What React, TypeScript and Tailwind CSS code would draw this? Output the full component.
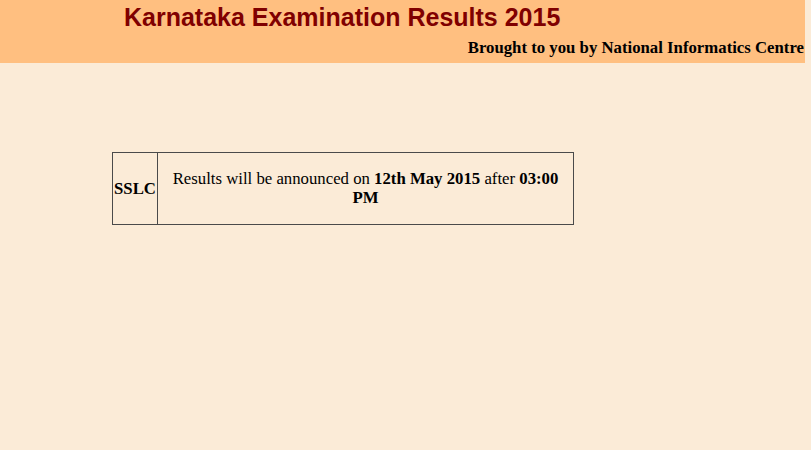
export default function App() {
  return (
    <div className="w-[811px] h-[450px] bg-[#fbebd7] overflow-hidden" style={{ fontFamily: '"Liberation Serif", serif' }}>
      <div className="w-[805px] h-[63px] bg-[#ffbf80] flex flex-col">
        <div className="pl-[124px] pt-[2px] h-[34px] text-[25px] leading-[30px] font-bold text-[#800000]" style={{ fontFamily: '"Liberation Sans", Arial, sans-serif' }}>
          Karnataka Examination Results 2015
        </div>
        <div className="text-right text-[16.75px] leading-[20px] font-bold text-black pr-[1px] pt-[4px]">
          Brought to you by National Informatics Centre
        </div>
      </div>
      <div className="pl-[112px] pt-[89px]">
        <div className="w-[462px] h-[73px] border-[1.5px] border-[#4a4a4a] flex">
          <div className="w-[45px] border-r-[1.5px] border-[#4a4a4a] flex items-center justify-center font-bold text-[16.75px] text-black">
            SSLC
          </div>
          <div className="flex-1 flex items-center justify-center text-center text-[16.75px] leading-[19px] text-black px-[8px] pb-[2px]">
            <span>
              Results will be announced on <b>12th May 2015</b> after <b>03:00 PM</b>
            </span>
          </div>
        </div>
      </div>
    </div>
  );
}
